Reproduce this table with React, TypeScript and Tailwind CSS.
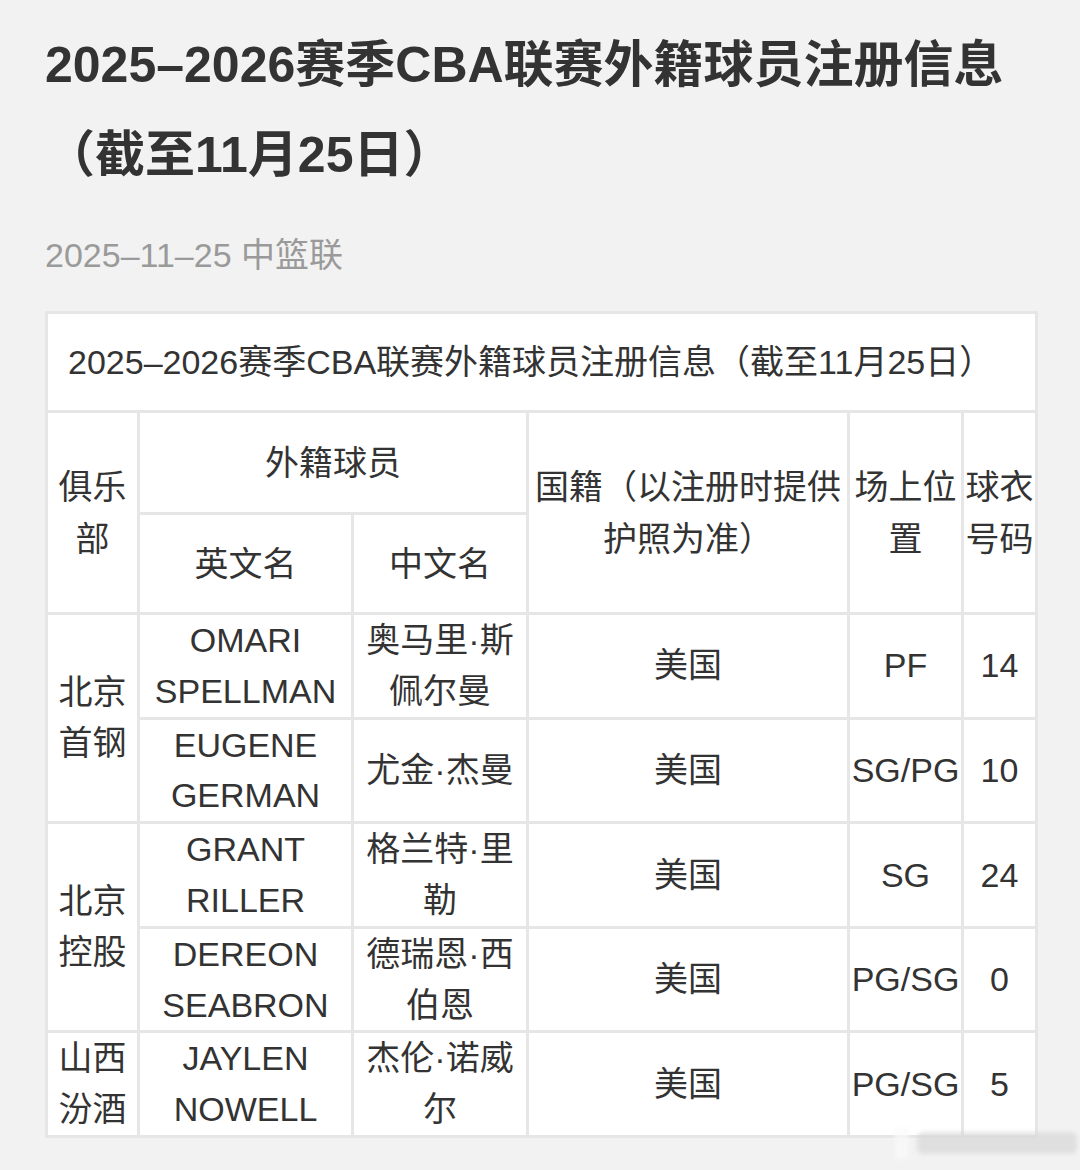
const rows = [
  { club: "北京首钢", span: 2, en: "OMARI SPELLMAN", cn: "奥马里·斯佩尔曼", nat: "美国", pos: "PF", no: "14" },
  { club: null, span: 0, en: "EUGENE GERMAN", cn: "尤金·杰曼", nat: "美国", pos: "SG/PG", no: "10" },
  { club: "北京控股", span: 2, en: "GRANT RILLER", cn: "格兰特·里勒", nat: "美国", pos: "SG", no: "24" },
  { club: null, span: 0, en: "DEREON SEABRON", cn: "德瑞恩·西伯恩", nat: "美国", pos: "PG/SG", no: "0" },
  { club: "山西汾酒", span: 1, en: "JAYLEN NOWELL", cn: "杰伦·诺威尔", nat: "美国", pos: "PG/SG", no: "5" },
];

const cell = "border-[3px] border-[#e6e6e6] bg-white text-center align-middle px-0";

export default function App() {
  return (
    <div className="relative min-h-[1170px] w-[1080px] bg-[#f2f2f2] font-['Liberation_Sans','Noto_Sans_CJK_SC',sans-serif] text-[#333333]">
      <div className="px-[45px] pt-[20px]">
        <h1 className="text-[50px] font-bold leading-[90px]">
          2025–2026赛季CBA联赛外籍球员注册信息（截至11月25日）
        </h1>
        <p className="mt-[35px] text-[34px] leading-[40px] text-[#9a9a9a]">2025–11–25 中篮联</p>

        <table className="mt-[36px] w-[990px] table-fixed border-collapse text-[34px] leading-[52px]">
          <colgroup>
            <col className="w-[92px]" />
            <col className="w-[214px]" />
            <col className="w-[175px]" />
            <col className="w-[321px]" />
            <col className="w-[114px]" />
            <col className="w-[74px]" />
          </colgroup>
          <tbody>
            <tr className="h-[99px]">
              <td colSpan={6} className="border-[3px] border-[#e6e6e6] bg-white pl-[20px] text-left align-middle">
                2025–2026赛季CBA联赛外籍球员注册信息（截至11月25日）
              </td>
            </tr>
            <tr className="h-[102px]">
              <td rowSpan={2} className={cell}>俱乐部</td>
              <td colSpan={2} className={cell}>外籍球员</td>
              <td rowSpan={2} className={cell}>国籍（以注册时提供护照为准）</td>
              <td rowSpan={2} className={cell}>场上位置</td>
              <td rowSpan={2} className={cell}>球衣号码</td>
            </tr>
            <tr className="h-[100px]">
              <td className={cell}>英文名</td>
              <td className={cell}>中文名</td>
            </tr>
            {rows.map((r) => (
              <tr key={r.en} className="h-[104px] leading-[50.8px]">
                {r.club && (
                  <td rowSpan={r.span} className={cell}>
                    {r.club}
                  </td>
                )}
                <td className={cell}>{r.en}</td>
                <td className={cell}>{r.cn}</td>
                <td className={cell}>{r.nat}</td>
                <td className={cell}>{r.pos}</td>
                <td className={cell}>{r.no}</td>
              </tr>
            ))}
          </tbody>
        </table>
      </div>

      {/* blurred watermark, bottom right */}
      <div className="absolute left-[895px] top-[1127px] flex items-center gap-[8px] opacity-70 blur-[2px]">
        <div className="h-[32px] w-[14px] rounded-[3px] bg-[#fafafa]" />
        <div className="h-[22px] w-[160px] rounded-[6px] bg-[#d8d8d8]" />
      </div>
    </div>
  );
}
